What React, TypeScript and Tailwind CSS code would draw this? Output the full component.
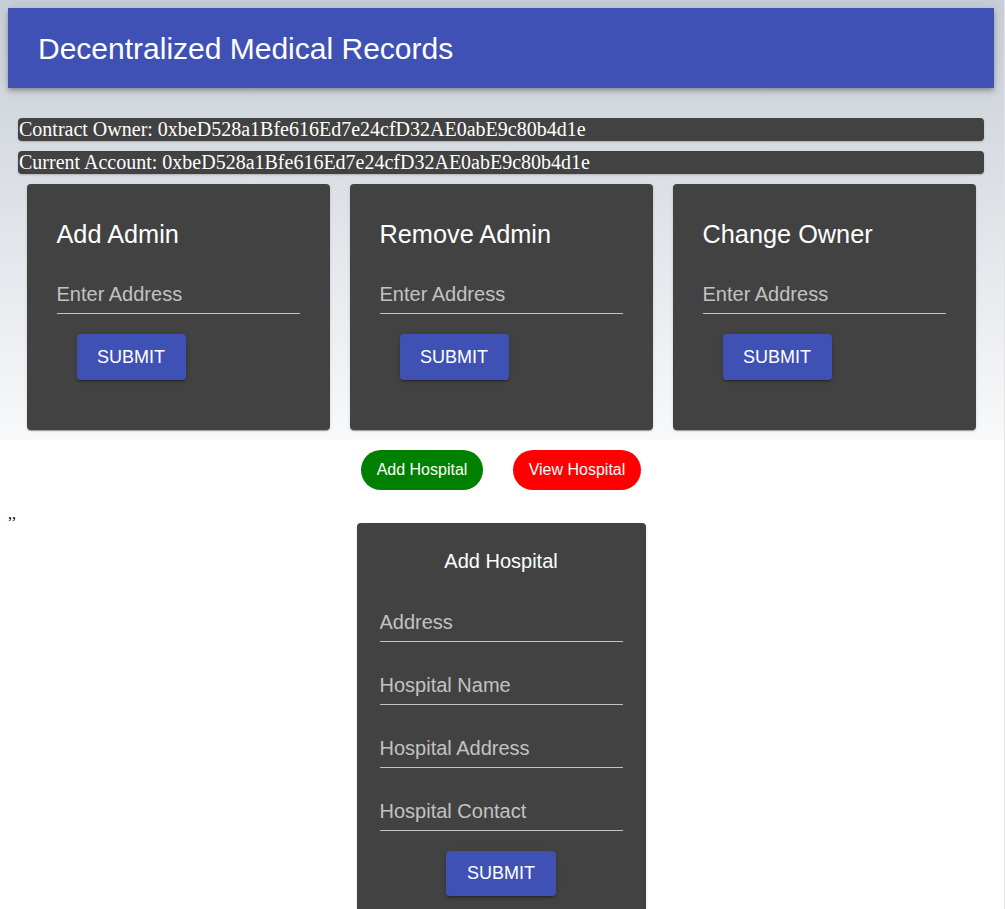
import React from "react";

const ADDR = "0xbeD528a1Bfe616Ed7e24cfD32AE0abE9c80b4d1e";

function Field({ placeholder }: { placeholder: string }) {
  return (
    <input
      type="text"
      placeholder={placeholder}
      className="block w-[243px] h-[36px] bg-transparent border-0 border-b border-[#c4c4c4] outline-none text-[20px] text-white placeholder:text-[#c2c2c2] font-['Liberation_Sans',Arial,sans-serif] p-0 pb-[2px]"
    />
  );
}

function SubmitButton({ className = "" }: { className?: string }) {
  return (
    <button
      className={
        "bg-[#3f51b5] text-white text-[18px] uppercase rounded-[4px] shadow-[0px_3px_1px_-2px_rgba(0,0,0,0.2),0px_2px_2px_0px_rgba(0,0,0,0.14),0px_1px_5px_0px_rgba(0,0,0,0.12)] flex items-center justify-center " +
        className
      }
    >
      Submit
    </button>
  );
}

function AdminCard({ title }: { title: string }) {
  return (
    <div className="w-[303px] h-[246px] bg-[#424242] rounded-[4px] shadow-[0px_2px_1px_-1px_rgba(0,0,0,0.2),0px_1px_1px_0px_rgba(0,0,0,0.14),0px_1px_3px_0px_rgba(0,0,0,0.12)] pt-[36px] pl-[30px]">
      <div className="text-[25.3px] leading-[28px] text-white whitespace-nowrap">{title}</div>
      <div className="mt-[30px]">
        <Field placeholder="Enter Address" />
      </div>
      <SubmitButton className="ml-[20px] mt-[20px] w-[109px] h-[46px]" />
    </div>
  );
}

export default function App() {
  return (
    <div className="min-h-screen w-full bg-white flex font-['Liberation_Sans',Arial,sans-serif]">
      <div className="flex-1 min-w-0">
        <div className="bg-gradient-to-b from-[#c8ced7] to-[#f8f9fa] pt-2 pl-2 pr-[10px] pb-[10px]">
          <header className="h-[80px] bg-[#3f51b5] flex items-center pl-[30px] text-white text-[30px] shadow-[0px_2px_4px_-1px_rgba(0,0,0,0.2),0px_4px_5px_0px_rgba(0,0,0,0.14),0px_1px_10px_0px_rgba(0,0,0,0.12)]">
            Decentralized Medical Records
          </header>
          <div className="mt-[30px] mx-[10px] flex flex-col gap-[10px] font-['Liberation_Serif','Times_New_Roman',serif]">
            <div className="h-[23px] leading-[23px] bg-[#424242] rounded-[4px] text-white text-[20px] pl-px whitespace-nowrap shadow-[0px_1px_2px_rgba(0,0,0,0.2)]">
              Contract Owner: {ADDR}
            </div>
            <div className="h-[23px] leading-[23px] bg-[#424242] rounded-[4px] text-white text-[20px] pl-px whitespace-nowrap shadow-[0px_1px_2px_rgba(0,0,0,0.2)]">
              Current Account: {ADDR}
            </div>
          </div>
          <div className="mt-[10px] flex justify-center gap-[20px]">
            <AdminCard title="Add Admin" />
            <AdminCard title="Remove Admin" />
            <AdminCard title="Change Owner" />
          </div>
        </div>
        <div className="pt-[10px] pl-2 pr-[10px]">
          <div className="flex justify-center gap-[30px]">
            <button className="h-[40px] w-[122px] rounded-full bg-[#008000] text-white text-[16px]">
              Add Hospital
            </button>
            <button className="h-[40px] w-[128px] rounded-full bg-[#ff0000] text-white text-[16px]">
              View Hospital
            </button>
          </div>
          <div className="mt-[15px] h-[18px] leading-[18px] text-[16px] text-black font-['Liberation_Serif','Times_New_Roman',serif]">
            ,,
          </div>
          <div className="mx-auto w-[289px] bg-[#424242] rounded-t-[4px] shadow-[0px_2px_1px_-1px_rgba(0,0,0,0.2),0px_1px_1px_0px_rgba(0,0,0,0.14),0px_1px_3px_0px_rgba(0,0,0,0.12)] pt-[24px] pb-[30px] flex flex-col items-center">
            <div className="text-[20px] leading-[28px] text-white">Add Hospital</div>
            <div className="mt-[4px] flex flex-col">
              <div className="h-[63px] flex items-end"><Field placeholder="Address" /></div>
              <div className="h-[63px] flex items-end"><Field placeholder="Hospital Name" /></div>
              <div className="h-[63px] flex items-end"><Field placeholder="Hospital Address" /></div>
              <div className="h-[63px] flex items-end"><Field placeholder="Hospital Contact" /></div>
            </div>
            <SubmitButton className="mt-[20px] w-[110px] h-[45px]" />
          </div>
        </div>
      </div>
      <div className="w-px bg-[#e3e3e3] shrink-0" />
    </div>
  );
}
